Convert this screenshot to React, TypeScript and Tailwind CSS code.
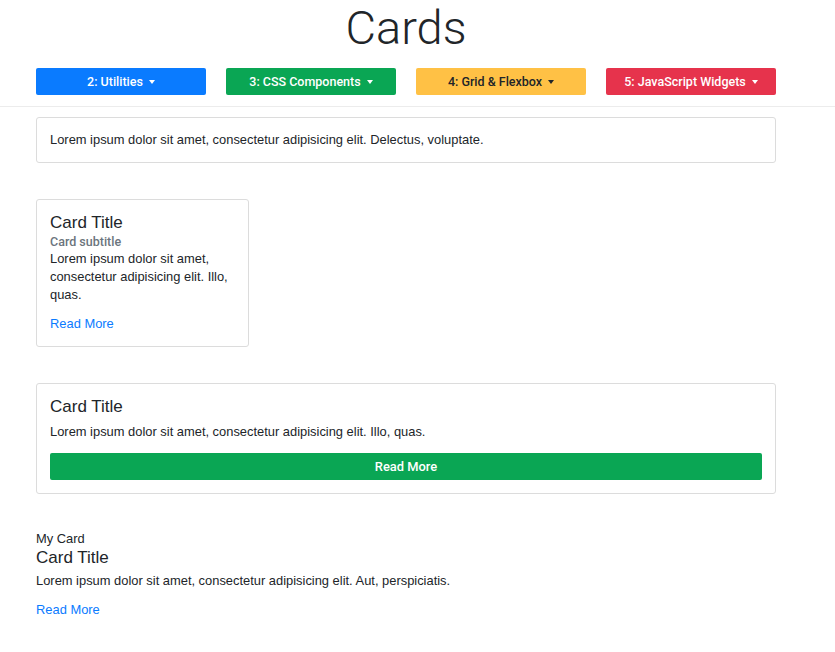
const menus = [
  { label: "2: Utilities", cls: "bg-[#0a7bff] text-white" },
  { label: "3: CSS Components", cls: "bg-[#0aa654] text-white" },
  { label: "4: Grid & Flexbox", cls: "bg-[#ffc145] text-[#212529]" },
  { label: "5: JavaScript Widgets", cls: "bg-[#e6334c] text-white" },
];

function Caret() {
  return (
    <span className="ml-[6px] inline-block h-0 w-0 border-x-[3.5px] border-t-[4px] border-x-transparent border-t-current align-middle" />
  );
}

export default function App() {
  return (
    <div className="min-h-[652px] bg-white font-['Liberation_Sans',Arial,sans-serif] text-[12.9px] leading-[18px] text-[#212529]">
      <header className="border-b border-[#ececec] pb-[11px]">
        <h1 className="w-[812px] text-center font-['Roboto',sans-serif] text-[47px] font-light leading-[55px]">
          Cards
        </h1>
        <nav className="ml-[36px] mt-[13px] grid w-[740px] grid-cols-4 gap-[20px]">
          {menus.map((m) => (
            <button
              key={m.label}
              className={`flex h-[27px] items-center justify-center rounded-[2px] font-['Roboto',sans-serif] text-[12.5px] font-medium ${m.cls}`}
            >
              {m.label}
              <Caret />
            </button>
          ))}
        </nav>
      </header>

      <main className="ml-[36px] flex w-[740px] flex-col pt-[10px]">
        <div className="rounded-[3px] border border-[#dcdcdc] p-[13px]">
          <p>Lorem ipsum dolor sit amet, consectetur adipisicing elit. Delectus, voluptate.</p>
        </div>

        <div className="mt-[36px] w-[213px] rounded-[3px] border border-[#dcdcdc] p-[13px]">
          <h5 className="text-[17px] leading-[20px]">Card Title</h5>
          <h6 className="mt-[1px] font-['Roboto',sans-serif] text-[12.5px] font-medium leading-[16px] text-[#6c757d]">
            Card subtitle
          </h6>
          <p>Lorem ipsum dolor sit amet, consectetur adipisicing elit. Illo, quas.</p>
          <a href="#" className="mt-[11px] block text-[#0a7bff]">
            Read More
          </a>
        </div>

        <div className="mt-[36px] rounded-[3px] border border-[#dcdcdc] p-[13px]">
          <h5 className="text-[17px] leading-[20px]">Card Title</h5>
          <p className="mt-[6px]">Lorem ipsum dolor sit amet, consectetur adipisicing elit. Illo, quas.</p>
          <button className="mt-[12px] h-[27px] w-full rounded-[2px] bg-[#0aa654] font-['Roboto',sans-serif] font-medium text-white">
            Read More
          </button>
        </div>

        <div className="mt-[37px]">
          <div className="leading-[16px]">My Card</div>
          <h5 className="mt-[1px] text-[17px] leading-[20px]">Card Title</h5>
          <p className="mt-[4px]">Lorem ipsum dolor sit amet, consectetur adipisicing elit. Aut, perspiciatis.</p>
          <a href="#" className="mt-[11px] block text-[#0a7bff]">
            Read More
          </a>
        </div>
      </main>
    </div>
  );
}
